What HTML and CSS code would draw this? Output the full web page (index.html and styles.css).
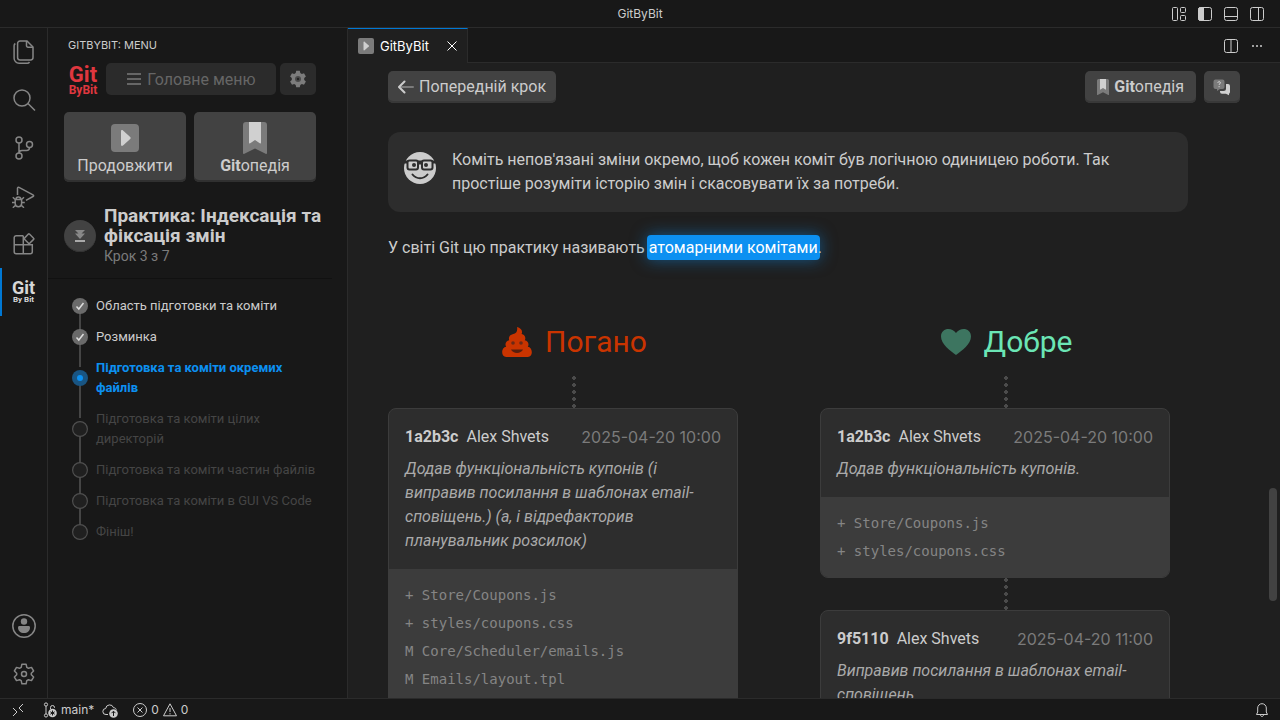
FILE: index.html
```html
<!DOCTYPE html>
<html lang="uk">
<head>
    <meta charset="UTF-8">
    <meta name="viewport" content="width=device-width, initial-scale=1.0">
    <title>GitByBit</title>
    <link rel="stylesheet" href="styles.css">
</head>
<body>
    <!-- Icons used more than once -->
    <svg class="sprite" width="0" height="0">
        <symbol id="dot-done" viewBox="0 0 16 16"><circle cx="8" cy="8" r="8" fill="#6a6a6a"/><path d="M4.5 8.5l2.3 2.5 4.7-6" fill="none" stroke="#ddd" stroke-width="1.5"/></symbol>
        <symbol id="dot-todo" viewBox="0 0 16 16"><circle cx="8" cy="8" r="7.4" fill="#202020" stroke="#4f4f4f" stroke-width="1.2"/></symbol>
        <symbol id="bookmark" viewBox="0 0 24 32"><path d="M3 0h18a3 3 0 0 1 3 3v28c0 1-.6 1.2-1.4.8L12 26.5 1.4 31.8C.6 32.2 0 32 0 31V3a3 3 0 0 1 3-3z" fill="#7b7b7b"/><path d="M6 0h12v20.5c0 .9-.6 1.1-1.2.7L12 18l-4.800 3.200c-.6.4-1.200.2-1.200-.7z" fill="#d0d0d0"/></symbol>
    </svg>

    <header class="titlebar">
        <span class="window-title">GitByBit</span>
        <div class="layout-controls">
            <button class="icon-btn" aria-label="Layout">
                <svg width="16" height="16" viewBox="0 0 16 16" class="line"><rect x="1.5" y="1.5" width="5" height="13" rx="1"/><rect x="9.5" y="1.5" width="5" height="5" rx="1"/><rect x="9.5" y="9.5" width="5" height="5" rx="1"/></svg>
            </button>
            <button class="icon-btn" aria-label="Primary side bar">
                <svg width="16" height="16" viewBox="0 0 16 16" class="line"><rect x="1.5" y="1.5" width="13" height="13" rx="2"/><path d="M3.5 1.5h3v13h-3a2 2 0 0 1-2-2v-9a2 2 0 0 1 2-2z" fill="currentColor"/></svg>
            </button>
            <button class="icon-btn" aria-label="Panel">
                <svg width="16" height="16" viewBox="0 0 16 16" class="line"><rect x="1.5" y="1.5" width="13" height="13" rx="2"/><path d="M1.5 10.5h13"/></svg>
            </button>
            <button class="icon-btn" aria-label="Secondary side bar">
                <svg width="16" height="16" viewBox="0 0 16 16" class="line"><rect x="1.5" y="1.5" width="13" height="13" rx="2"/><path d="M9.5 1.5v13"/></svg>
            </button>
        </div>
    </header>

    <div class="workbench">
        <nav class="activity-bar">
            <button class="activity" aria-label="Explorer">
                <svg width="24" height="24" viewBox="0 0 24 24" class="line thick"><path d="M8 1h7l6 6v10.5a2.4 2.4 0 0 1-2.4 2.4H8a2.4 2.4 0 0 1-2.4-2.4V3.400A2.400 2.400 0 0 1 8 1z"/><path d="M14.5 1v4.700A1.500 1.500 0 0 0 16 7.200h5"/><path d="M3.300 3.500c-.8.5-1.200 1.200-1.200 2.200v12.500a5 5 0 0 0 5 5h8.200c1 0 1.700-.4 2.200-1.200"/></svg>
            </button>
            <button class="activity" aria-label="Search">
                <svg width="24" height="24" viewBox="0 0 24 24" class="line thick"><circle cx="10" cy="10" r="8"/><path d="M16 15.5l7 7"/></svg>
            </button>
            <button class="activity" aria-label="Source control">
                <svg width="24" height="24" viewBox="0 0 24 24" class="line thick"><circle cx="7" cy="4" r="3"/><circle cx="17.5" cy="8.5" r="3"/><circle cx="7" cy="20" r="3"/><path d="M7 7v10M17.5 11.5c0 2-1 3-3 3H10c-1.800 0-3 1-3 2.700"/></svg>
            </button>
            <button class="activity" aria-label="Run and debug">
                <svg width="24" height="24" viewBox="0 0 24 24" class="line thick"><path d="M5.500 11V4.300c0-1 .7-1.300 1.500-.9l14 7.400c.9.500.9 1.200 0 1.700l-7 3.800"/><path d="M3.200 15.500h6.400v4a3.200 3.200 0 0 1-6.400 0zM4 15.200c0-3 4.800-3 4.800 0M.8 13.200l2.400 2.300M12 13.200l-2.400 2.300M0 18.500h3.200M9.600 18.500h3.200M.8 23.700l2.800-2.500M12 23.700l-2.800-2.500"/></svg>
            </button>
            <button class="activity" aria-label="Extensions">
                <svg width="24" height="24" viewBox="0 0 24 24" class="line thick"><path d="M11.300 3.700H4.200a2 2 0 0 0-2 2v14.100a2 2 0 0 0 2 2h14.100a2 2 0 0 0 2-2v-7H2.200M11.300 3.700v18.100"/><path d="M17.400 2l4.200 4.200a.8.8 0 0 1 0 1.200l-3.900 3.900a.8.8 0 0 1-1.200 0l-4-4a.8.8 0 0 1 0-1.200L16.400 2a.7.7 0 0 1 1 0z"/></svg>
            </button>
            <button class="activity active" aria-label="GitByBit">
                <span class="activity-logo">Git<small>By Bit</small></span>
            </button>
            <button class="activity push-down" aria-label="Accounts">
                <svg width="24" height="24" viewBox="0 0 24 24" class="line thick"><circle cx="12" cy="12" r="11.2"/><circle cx="12" cy="7.5" r="3.2" fill="currentColor" stroke="none"/><path d="M7.500 12h9c1 0 1.500.6 1.500 1.500 0 3.500-2.500 5.500-6 5.500s-6-2-6-5.500c0-.9.500-1.500 1.500-1.500z" fill="currentColor" stroke="none"/></svg>
            </button>
            <button class="activity" aria-label="Manage">
                <svg width="24" height="24" viewBox="0 0 24 24" class="line thick"><circle cx="12" cy="12" r="2.5"/><path d="M9.900 2.200h4.200l.7 3.100 1.700 1 3-.9 2.100 3.600-2.300 2.200v1.600l2.300 2.200-2.100 3.600-3-.9-1.700 1-.7 3.100H9.900l-.7-3.100-1.700-1-3 .9L2.400 15l2.300-2.200v-1.600L2.400 9l2.100-3.600 3 .9 1.700-1z" stroke-linejoin="round"/></svg>
            </button>
        </nav>

        <aside class="sidebar">
            <h2 class="sidebar-title">GITBYBIT: MENU</h2>
            <div class="menu-row">
                <span class="logo">Git<small>ByBit</small></span>
                <button class="btn btn-muted btn-menu">
                    <svg width="16" height="14" viewBox="0 0 16 14"><path d="M1 2h14M1 7h14M1 12h14" stroke="currentColor" stroke-width="2"/></svg>
                    Головне меню
                </button>
                <button class="btn btn-muted btn-square" aria-label="Налаштування">
                    <svg width="18" height="18" viewBox="0 0 18 18"><path d="M7.200.8h3.600l.5 2.300 1.500.9 2.200-.8 1.900 3.200-1.700 1.600v2l1.700 1.600-1.900 3.200-2.200-.8-1.500.9-.5 2.300H7.200l-.5-2.300-1.500-.9-2.200.8-1.900-3.200L2.800 10V8L1.100 6.400 3 3.200l2.200.8 1.500-.9z" fill="#7c7c7c"/><circle cx="9" cy="9" r="3" fill="#4a4a4a"/><circle cx="9" cy="9" r="1.2" fill="#222"/></svg>
                </button>
            </div>
            <div class="tiles">
                <button class="tile">
                    <svg width="28" height="32" viewBox="0 0 28 32"><rect y="2" width="28" height="28" rx="4" fill="#7b7b7b"/><path d="M10 9.500c0-1.500 1-1.800 2-1l7.200 6.500c.6.6.6 1.400 0 2L12 23.500c-1 .8-2 .5-2-1z" fill="#d0d0d0"/></svg>
                    Продовжити
                </button>
                <button class="tile">
                    <svg width="24" height="32"><use href="#bookmark"/></svg>
                    <span><b>Git</b>опедія</span>
                </button>
            </div>

            <section class="lesson">
                <span class="lesson-icon">
                    <svg width="14" height="14" viewBox="0 0 14 14"><path d="M2 1h10L8.500 4.500H12L7 10 2 4.500h3.500z" fill="#888"/><path d="M2 12h10" stroke="#ccc" stroke-width="1.5"/></svg>
                </span>
                <div>
                    <h1 class="lesson-title">Практика: Індексація та фіксація змін</h1>
                    <p class="lesson-step">Крок 3 з 7</p>
                </div>
            </section>

            <ol class="steps">
                <li class="step done">
                    <svg class="dot" width="16" height="16"><use href="#dot-done"/></svg>
                    Область підготовки та коміти
                </li>
                <li class="step done">
                    <svg class="dot" width="16" height="16"><use href="#dot-done"/></svg>
                    Розминка
                </li>
                <li class="step current">
                    <svg class="dot" width="16" height="16" viewBox="0 0 16 16"><circle cx="8" cy="8" r="8" fill="#195583"/><circle cx="8" cy="8" r="3" fill="#0c90f1"/></svg>
                    Підготовка та коміти окремих файлів
                </li>
                <li class="step">
                    <svg class="dot" width="16" height="16"><use href="#dot-todo"/></svg>
                    Підготовка та коміти цілих директорій
                </li>
                <li class="step">
                    <svg class="dot" width="16" height="16"><use href="#dot-todo"/></svg>
                    Підготовка та коміти частин файлів
                </li>
                <li class="step">
                    <svg class="dot" width="16" height="16"><use href="#dot-todo"/></svg>
                    Підготовка та коміти в GUI VS Code
                </li>
                <li class="step">
                    <svg class="dot" width="16" height="16"><use href="#dot-todo"/></svg>
                    Фініш!
                </li>
            </ol>
        </aside>

        <main class="editor">
            <div class="tabs">
                <div class="tab">
                    <svg width="16" height="16" viewBox="0 0 16 16"><rect width="16" height="16" rx="2" fill="#7b7b7b"/><path d="M5.500 4.500c0-1 .6-1.200 1.300-.6l4 3.500c.4.4.4.8 0 1.200l-4 3.500c-.7.6-1.300.4-1.300-.6z" fill="#d0d0d0"/></svg>
                    <span class="tab-name">GitByBit</span>
                    <button class="icon-btn" aria-label="Close">
                        <svg width="16" height="16" viewBox="0 0 16 16" class="line"><path d="M3.500 3.500l9 9M12.500 3.500l-9 9"/></svg>
                    </button>
                </div>
                <div class="tab-actions">
                    <button class="icon-btn" aria-label="Split editor">
                        <svg width="16" height="16" viewBox="0 0 16 16" class="line"><rect x="1.5" y="1.5" width="13" height="13" rx="2"/><path d="M8 1.500v13"/></svg>
                    </button>
                    <button class="icon-btn" aria-label="More">
                        <svg width="16" height="16" viewBox="0 0 16 16" fill="currentColor"><circle cx="4" cy="8" r="1"/><circle cx="8" cy="8" r="1"/><circle cx="12" cy="8" r="1"/></svg>
                    </button>
                </div>
            </div>

            <div class="page">
                <div class="toolbar">
                    <button class="btn btn-back">
                        <svg width="16" height="14" viewBox="0 0 16 14" fill="none" stroke-width="2" stroke-linecap="round"><path d="M3 7h12" stroke="#7b7b7b"/><path d="M6.500 1.500L1 7l5.500 5.500" stroke="#ccc" stroke-linejoin="round"/></svg>
                        Попередній крок
                    </button>
                    <button class="btn btn-wiki">
                        <svg width="12" height="16"><use href="#bookmark"/></svg>
                        <span><b>Git</b>опедія</span>
                    </button>
                    <button class="btn btn-square" aria-label="Допомога">
                        <svg width="18" height="17" viewBox="0 0 18 17"><path d="M13 5h2a2 2 0 0 1 2 2v6a2 2 0 0 1-1 1.700v1.600l-3-1.500H9a2 2 0 0 1-2-2V12h3.500a2.500 2.500 0 0 0 2.500-2.500z" fill="#d0d0d0"/><path d="M2.500.5h7a2 2 0 0 1 2 2V8a2 2 0 0 1-2 2H7l-3 2v-2H2.500a2 2 0 0 1-2-2V2.500a2 2 0 0 1 2-2z" fill="#7b7b7b"/><path d="M4.800 3.700c.3-1.400 2.700-1.300 2.600.1 0 1-1.300 1-1.300 2M6.100 7.200v1" fill="none" stroke="#ddd"/></svg>
                    </button>
                </div>

                <div class="callout">
                    <svg width="32" height="32" viewBox="0 0 32 32"><circle cx="16" cy="16" r="16" fill="#ccc"/><path d="M0 8.500h32v3H0z" fill="#2d2d2d"/><rect x="3.5" y="8.5" width="10.5" height="9" rx="2" fill="#ccc" stroke="#2d2d2d" stroke-width="2"/><rect x="18" y="8.5" width="10.5" height="9" rx="2" fill="#ccc" stroke="#2d2d2d" stroke-width="2"/><path d="M14 9.500h4v3h-4z" fill="#2d2d2d"/><circle cx="10" cy="13" r="2" fill="#2d2d2d"/><circle cx="22" cy="13" r="2" fill="#2d2d2d"/><path d="M8.500 22.500c4 5 11 5 15 0" fill="none" stroke="#2d2d2d" stroke-width="2" stroke-linecap="round"/></svg>
                    <p>Коміть непов'язані зміни окремо, щоб кожен коміт був логічною одиницею роботи. Так простіше розуміти історію змін і скасовувати їх за потреби.</p>
                </div>

                <p class="intro">У світі Git цю практику називають <mark>атомарними комітами</mark>.</p>

                <div class="compare">
                    <section class="column">
                        <h2 class="verdict bad">
                            <svg width="32" height="32" viewBox="0 0 32 32"><path d="M16 1c4 1 6 3.800 4.600 7 3 .5 4.700 3.500 3.200 6.200 3.200.6 4.700 4 3 6.600 5 .4 5.700 10.200 0 10.200H5.200c-5.700 0-5-9.800 0-10.200-1.700-2.600-.2-6 3-6.600-1-3 .6-5.500 4-6.200 3-.4 4.700-3 3.800-7z" fill="#ca3400"/><circle cx="12" cy="17" r="1.8" fill="#6b2a16"/><circle cx="20" cy="17" r="1.8" fill="#6b2a16"/><path d="M10 23.500h12c-2 4.500-10 4.500-12 0z" fill="#571f0e"/></svg>
                            Погано
                        </h2>
                        <div class="connector"></div>
                        <article class="commit">
                            <div class="commit-body">
                                <div class="commit-meta"><b>1a2b3c</b><span>Alex Shvets</span><time>2025-04-20 10:00</time></div>
                                <p class="commit-message">Додав функціональність купонів (і виправив посилання в шаблонах email-сповіщень.) (а, і відрефакторив планувальник розсилок)</p>
                            </div>
                            <ul class="files">
                                <li>+ Store/Coupons.js</li>
                                <li>+ styles/coupons.css</li>
                                <li>M Core/Scheduler/emails.js</li>
                                <li>M Emails/layout.tpl</li>
                            </ul>
                        </article>
                    </section>

                    <section class="column">
                        <h2 class="verdict good">
                            <svg width="32" height="32" viewBox="0 0 32 32"><path d="M16 29C10 24.500 1 18 1 10.500 1 2.500 11 .5 16 7c5-6.500 15-4.500 15 3.500C31 18 22 24.500 16 29z" fill="#3d7560"/></svg>
                            Добре
                        </h2>
                        <div class="connector"></div>
                        <article class="commit">
                            <div class="commit-body">
                                <div class="commit-meta"><b>1a2b3c</b><span>Alex Shvets</span><time>2025-04-20 10:00</time></div>
                                <p class="commit-message">Додав функціональність купонів.</p>
                            </div>
                            <ul class="files">
                                <li>+ Store/Coupons.js</li>
                                <li>+ styles/coupons.css</li>
                            </ul>
                        </article>
                        <div class="connector"></div>
                        <article class="commit">
                            <div class="commit-body">
                                <div class="commit-meta"><b>9f5110</b><span>Alex Shvets</span><time>2025-04-20 11:00</time></div>
                                <p class="commit-message">Виправив посилання в шаблонах email-сповіщень.</p>
                            </div>
                        </article>
                    </section>
                </div>
            </div>
            <div class="scroll-thumb"></div>
        </main>
    </div>

    <footer class="statusbar">
        <button class="status remote" aria-label="Remote">
            <svg width="16" height="16" viewBox="0 0 16 16" class="line"><path d="M3 6l4 4-4 4M13 2L9 6l4 4"/></svg>
        </button>
        <button class="status">
            <svg width="16" height="16" viewBox="0 0 16 16" class="line"><circle cx="4" cy="2.5" r="1.6"/><circle cx="4" cy="13.5" r="1.6"/><path d="M4 4v8M8.500 7V5.500a2 2 0 0 1 4 0V6"/><circle cx="10.5" cy="11" r="4.3" fill="currentColor" stroke="none"/><path d="M10.500 8.500v5M8.300 9.800l4.400 2.400M12.700 9.800l-4.400 2.400" stroke="#181818"/></svg>
            main*
        </button>
        <button class="status" aria-label="Publish branch">
            <svg width="16" height="16" viewBox="0 0 16 16" class="line"><path d="M6 12.500H4a3 3 0 0 1-.3-6 4 4 0 0 1 7.800-.8c1.500 0 2.500.8 2.800 2"/><circle cx="11.5" cy="11.5" r="4.3" fill="currentColor" stroke="none"/><path d="M11.500 14V9.300M9.500 11.200l2-2 2 2" stroke="#181818"/></svg>
        </button>
        <button class="status problems">
            <svg width="16" height="16" viewBox="0 0 16 16" class="line"><circle cx="8" cy="8" r="6.5"/><path d="M5.500 5.500l5 5M10.500 5.500l-5 5"/></svg>
            0
            <svg width="16" height="16" viewBox="0 0 16 16" class="line"><path d="M8 1.800l6.500 12h-13zM8 6v4M8 11.200v1.200"/></svg>
            0
        </button>
        <button class="status bell" aria-label="Notifications">
            <svg width="16" height="16" viewBox="0 0 16 16" class="line"><path d="M2.500 12.500L3.700 10V6a4.300 4.300 0 0 1 8.600 0v4l1.200 2.500zM6.500 13c.3 2 2.700 2 3 0"/></svg>
        </button>
    </footer>
</body>
</html>
```
FILE: styles.css
```css
* {
    box-sizing: border-box;
}
body {
    margin: 0;
    height: 100vh;
    display: flex;
    flex-direction: column;
    overflow: hidden;
    background: #181818;
    color: #ccc;
    font-family: Inter, "Liberation Sans", sans-serif;
    font-size: 12px;
}
h1, h2, p, ul, ol {
    margin: 0;
    padding: 0;
}
ul, ol {
    list-style: none;
}
button {
    border: none;
    padding: 0;
    background: none;
    color: inherit;
    font: inherit;
    cursor: pointer;
}
svg {
    flex: none;
    display: block;
}
.sprite {
    position: absolute;
}
.line {
    fill: none;
    stroke: currentColor;
    stroke-width: 1;
}
.thick {
    stroke-width: 1.5;
}
.icon-btn {
    width: 16px;
    height: 16px;
}

/* title bar */
.titlebar {
    flex: none;
    height: 28px;
    border-bottom: 1px solid #2b2b2b;
    display: grid;
    grid-template-columns: 1fr auto 1fr;
    align-items: center;
    padding: 0 15px;
}
.window-title {
    grid-column: 2;
}
.layout-controls {
    justify-self: end;
    display: flex;
    gap: 10px;
}

.workbench {
    flex: 1;
    min-height: 0;
    display: flex;
}

/* activity bar */
.activity-bar {
    flex: none;
    width: 48px;
    border-right: 1px solid #2b2b2b;
    display: flex;
    flex-direction: column;
}
.activity {
    height: 48px;
    display: flex;
    align-items: center;
    justify-content: center;
    color: #868686;
}
.activity.active {
    border-left: 2px solid #0078d4;
    padding-right: 2px;
    color: #d7d7d7;
}
.push-down {
    margin-top: auto;
}
.activity-logo, .logo {
    display: flex;
    flex-direction: column;
    align-items: center;
    font-family: Roboto, "Liberation Sans", sans-serif;
    font-weight: bold;
}
.activity-logo {
    font-size: 18px;
    line-height: 16px;
}
.activity-logo small {
    font-size: 8px;
    line-height: 8px;
}

/* sidebar */
.sidebar {
    flex: none;
    width: 300px;
    border-right: 1px solid #2b2b2b;
}
.sidebar-title {
    padding: 0 20px;
    font-size: 11px;
    font-weight: normal;
    line-height: 35px;
}
.menu-row {
    display: flex;
    gap: 4px;
    padding: 0 31px 0 16px;
}
.logo {
    width: 38px;
    color: #e0373f;
    font-size: 22px;
    line-height: 18px;
    padding-top: 3px;
}
.logo small {
    font-size: 12px;
    line-height: 12px;
}
.btn {
    height: 32px;
    display: flex;
    align-items: center;
    justify-content: center;
    gap: 5px;
    border-radius: 5px;
    background: #424242;
    box-shadow: inset 0 -2px #383838;
    font-family: Roboto, "Liberation Sans", sans-serif;
    font-size: 16px;
}
.btn-muted {
    background: #2b2b2b;
    box-shadow: none;
    color: #666;
}
.btn-menu {
    flex: 1;
}
.btn-square {
    width: 36px;
}
.tiles {
    display: grid;
    grid-template-columns: 1fr 1fr;
    gap: 8px;
    padding: 16px 31px 0 16px;
}
.tile {
    height: 70px;
    display: flex;
    flex-direction: column;
    align-items: center;
    justify-content: flex-start;
    padding-top: 10px;
    border-radius: 5px;
    background: #424242;
    box-shadow: inset 0 -2px #303030;
    font-family: Roboto, "Liberation Sans", sans-serif;
    font-size: 16px;
    line-height: 24px;
}
.lesson {
    display: flex;
    align-items: center;
    gap: 8px;
    margin-right: 15px;
    padding: 24px 0 12px 16px;
    border-bottom: 1px solid #111;
    font-family: Roboto, "Liberation Sans", sans-serif;
}
.lesson-icon {
    flex: none;
    width: 32px;
    height: 32px;
    display: flex;
    align-items: center;
    justify-content: center;
    border-radius: 50%;
    background: #424242;
    box-shadow: inset 0 -1px #333;
}
.lesson-title {
    font-size: 19px;
    line-height: 20px;
}
.lesson-step {
    color: #7b7b7b;
    font-size: 14px;
    line-height: 20px;
}
.steps {
    padding: 17px 20px 0 24px;
    font-family: Roboto, "Liberation Sans", sans-serif;
    font-size: 13px;
    line-height: 20px;
}
.step {
    position: relative;
    display: flex;
    align-items: center;
    gap: 8px;
    margin-bottom: 11px;
    color: #454545;
}
/* line from one dot to the next, passing behind both */
.step::before {
    content: "";
    position: absolute;
    left: 7px;
    top: 50%;
    bottom: -20px;
    width: 2px;
    background: #454545;
}
.step:last-child::before {
    display: none;
}
.dot {
    position: relative;
}
.step.done {
    color: #ccc;
}
.step.current {
    color: #0c90f1;
    font-weight: bold;
}

/* editor */
.editor {
    flex: 1;
    min-width: 0;
    display: flex;
    flex-direction: column;
    position: relative;
    background: #1f1f1f;
}
.tabs {
    flex: none;
    height: 35px;
    display: flex;
    background: #181818;
    box-shadow: inset 0 -1px #2b2b2b;
}
.tab {
    display: flex;
    align-items: center;
    padding: 0 7px 0 10px;
    border-top: 1px solid #0078d4;
    border-right: 1px solid #2b2b2b;
    background: #1f1f1f;
    color: #fff;
}
.tab-name {
    margin: 0 15px 0 6px;
    font-size: 13px;
}
.tab-actions {
    margin-left: auto;
    padding-right: 15px;
    display: flex;
    align-items: center;
    gap: 10px;
}
.page {
    flex: 1;
    min-height: 0;
    overflow: hidden;
    padding: 8px 40px 0;
    font-family: Roboto, "Liberation Sans", sans-serif;
    font-size: 16px;
    line-height: 24px;
}
.toolbar {
    display: flex;
    gap: 8px;
}
.btn-back {
    margin-right: auto;
    padding: 0 10px;
}
.btn-wiki {
    padding: 0 12px;
}
.callout {
    max-width: 800px;
    display: flex;
    align-items: flex-start;
    gap: 16px;
    margin-top: 29px;
    padding: 16px;
    border-radius: 12px;
    background: #2d2d2d;
}
.callout svg {
    margin-top: 4px;
}
.intro {
    margin-top: 24px;
}
mark {
    margin: 0 -2px;
    padding: 3px 2px;
    border-radius: 4px;
    background: #0c90f1;
    color: #fff;
    box-shadow: 0 0 16px rgba(12, 144, 241, 0.5);
}
.compare {
    display: grid;
    grid-template-columns: repeat(2, minmax(0, 372px));
    gap: 60px;
    margin-top: 60px;
}
.verdict {
    display: flex;
    align-items: center;
    justify-content: center;
    gap: 12px;
    margin-bottom: 12px;
    font-size: 30px;
    font-weight: normal;
    line-height: 44px;
}
.bad {
    color: #ca3400;
}
.good {
    color: #6be5b5;
}
.connector {
    width: 4px;
    height: 32px;
    margin: 0 auto;
    background: radial-gradient(circle at 2px 2px, #4b4b4b 2px, transparent 2px) 0 0 / 4px 7px;
}
.commit {
    max-width: 350px;
    overflow: hidden;
    border: 1px solid #3c3c3c;
    border-radius: 8px;
    background: #2d2d2d;
}
.commit-body {
    padding: 16px;
}
.commit-meta {
    display: flex;
    gap: 8px;
    margin-bottom: 8px;
}
.commit-meta time {
    margin-left: auto;
    color: #7b7b7b;
    font-family: Inter, "Liberation Sans", sans-serif;
}
.commit-message {
    color: #aaa;
    font-style: italic;
}
.files {
    padding: 12px 16px;
    background: #3c3c3c;
    color: #858585;
    font-family: "DejaVu Sans Mono", monospace;
    font-size: 14px;
    line-height: 28px;
}
.scroll-thumb {
    position: absolute;
    right: 3px;
    top: 460px;
    width: 8px;
    height: 113px;
    border-radius: 4px;
    background: #424242;
}

/* status bar */
.statusbar {
    flex: none;
    height: 22px;
    display: flex;
    align-items: center;
    border-top: 1px solid #2b2b2b;
    padding: 0 10px;
}
.status {
    display: flex;
    align-items: center;
    gap: 3px;
    margin-right: 8px;
}
.remote {
    margin-right: 16px;
}
.problems {
    margin-left: 6px;
}
.bell {
    margin: 0 0 0 auto;
}
```
